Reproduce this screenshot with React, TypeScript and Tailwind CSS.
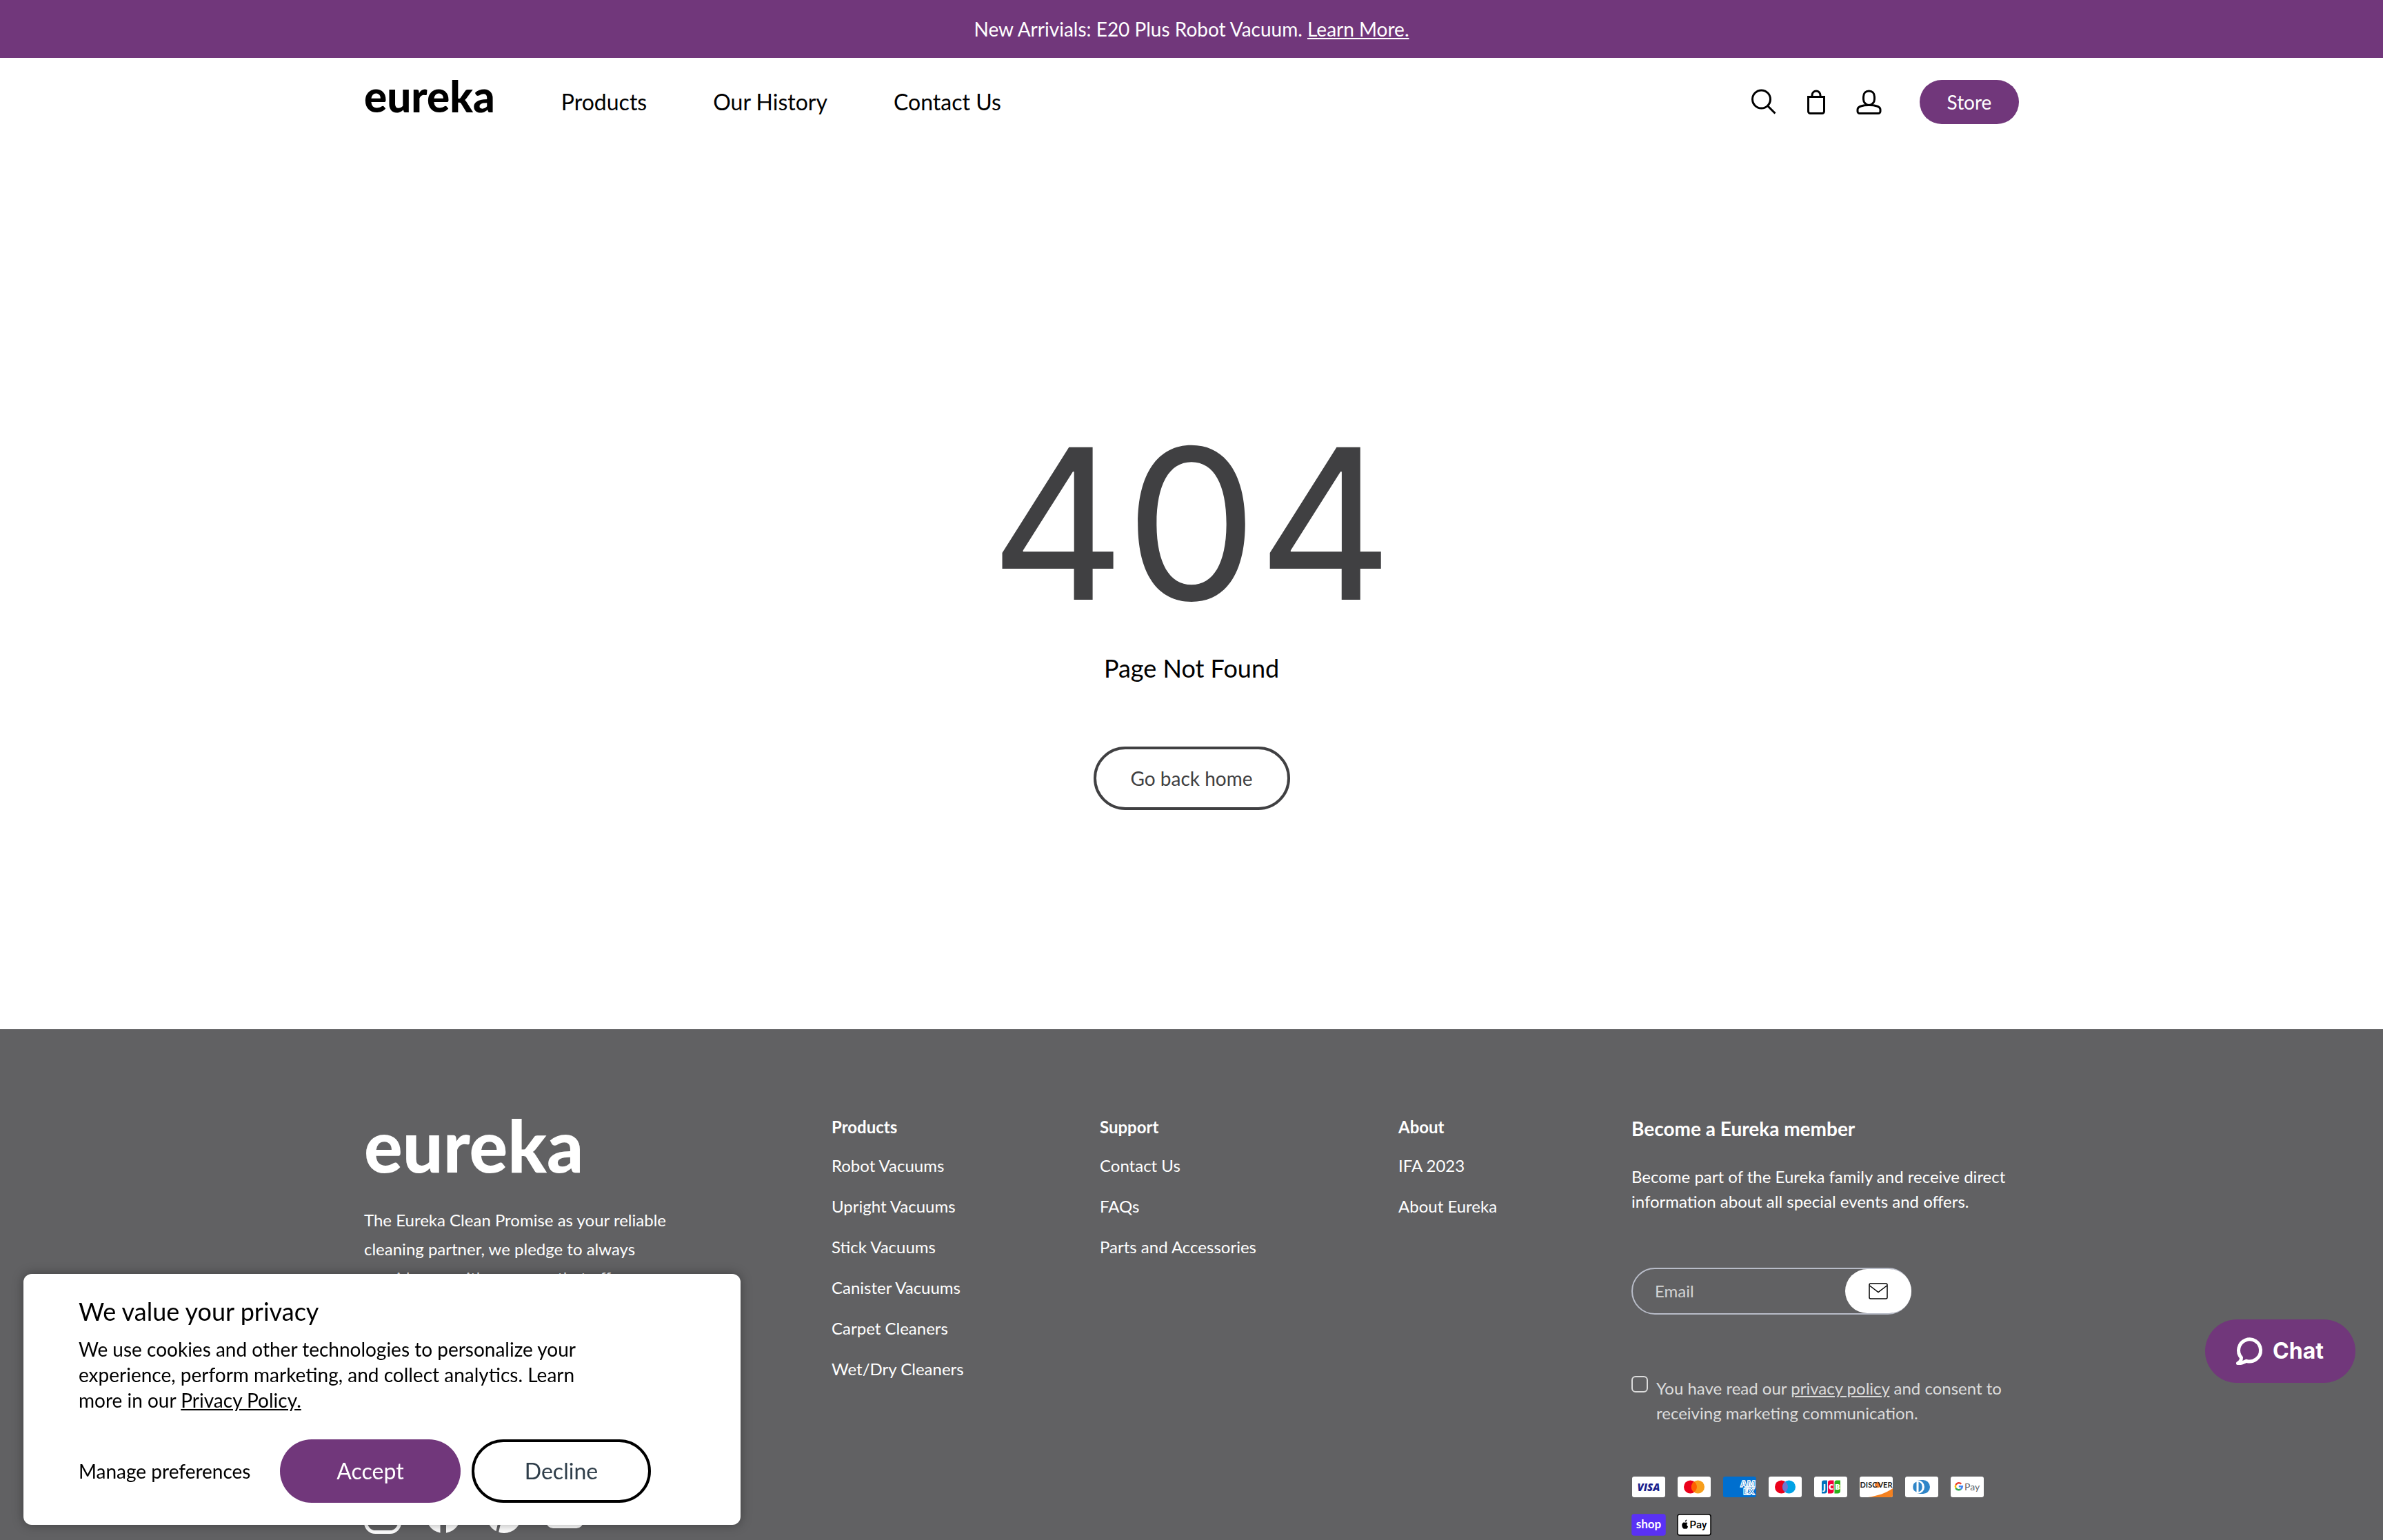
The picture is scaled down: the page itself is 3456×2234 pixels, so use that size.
import type { ReactNode } from "react";

const navLinks = ["Products", "Our History", "Contact Us"];

const footerColumns = [
  {
    title: "Products",
    links: [
      "Robot Vacuums",
      "Upright Vacuums",
      "Stick Vacuums",
      "Canister Vacuums",
      "Carpet Cleaners",
      "Wet/Dry Cleaners",
    ],
  },
  { title: "Support", links: ["Contact Us", "FAQs", "Parts and Accessories"] },
  { title: "About", links: ["IFA 2023", "About Eureka"] },
];

function Header() {
  return (
    <header className="mx-auto flex h-32 w-full max-w-[2400px] items-start justify-between pt-8">
      <div className="flex items-start gap-24">
        <a href="#" className="text-[62px] font-black leading-[46px]">
          eureka
        </a>
        <nav className="flex gap-24 text-[32px] leading-[64px]">
          {navLinks.map((link) => (
            <a key={link} href="#">
              {link}
            </a>
          ))}
        </nav>
      </div>

      <div className="flex h-16 items-center">
        <button aria-label="Search" className="mr-9">
          <svg className="size-10" viewBox="0 0 40 40" fill="none" stroke="#000" strokeWidth="3">
            <circle cx="15.500" cy="16" r="13" />
            <path d="M24.500 25.500 35.500 36.500" />
          </svg>
        </button>
        <button aria-label="Cart" className="mr-9">
          <svg className="size-10" viewBox="0 0 40 40" fill="none" stroke="#000" strokeWidth="3">
            <path d="M7.500 12.500h23v21a3 3 0 0 1-3 3h-17a3 3 0 0 1-3-3z" />
            <path d="M13 12.500V10a6 6 0 0 1 12 0v2.500" />
          </svg>
        </button>
        <button aria-label="Account" className="mr-[53px]">
          <svg className="size-10" viewBox="0 0 40 40" fill="none" stroke="#000" strokeWidth="3">
            <path d="M19.500 4c5 0 8 3.500 8 8.500v3.500c0 5-4 8.500-8 8.500s-8-3.500-8-8.500v-3.500c0-5 3-8.500 8-8.500z" />
            <path d="M19.500 24.500c9 0 16.500 2 16.500 6.500v2.500a3 3 0 0 1-3 3H6a3 3 0 0 1-3-3V31c0-4.500 7.500-6.500 16.500-6.500z" />
          </svg>
        </button>
        <a href="#" className="flex h-16 w-36 items-center justify-center rounded-full bg-[#71377b] text-[28px] text-white">
          Store
        </a>
      </div>
    </header>
  );
}

function Card({ label, bg = "#fff", border, children }: { label: string; bg?: string; border?: string; children: ReactNode }) {
  return (
    <li>
      <svg role="img" aria-label={label} className="h-8 w-[50px]" viewBox="0 0 50 32">
        <rect x="1" y="1" width="48" height="30" rx="3" fill={bg} stroke={border ?? "none"} strokeWidth="1.500" />
        {children}
      </svg>
    </li>
  );
}

function PaymentCards() {
  return (
    <ul className="mt-[73px] flex flex-wrap gap-x-4 gap-y-[23px] font-['Open_Sans']">
      <Card label="Visa">
        <text x="25" y="21.500" fontSize="15" fontWeight="800" fontStyle="italic" textAnchor="middle" fill="#1a1f8c">
          VISA
        </text>
      </Card>
      <Card label="Mastercard">
        <circle cx="19.500" cy="16" r="9.500" fill="#eb001b" />
        <circle cx="30.500" cy="16" r="9.500" fill="#f79e1b" />
        <path d="M25 8.300a9.500 9.500 0 0 1 0 15.400 9.500 9.500 0 0 1 0-15.400z" fill="#ff5f00" />
      </Card>
      <Card label="American Express" bg="#006fcf">
        <g fill="none" stroke="#fff" strokeWidth="1.300" fontWeight="800" fontSize="13">
          <text x="26" y="15.500">AM</text>
          <text x="30" y="26.500">EX</text>
        </g>
      </Card>
      <Card label="Maestro">
        <circle cx="19.500" cy="16" r="9.500" fill="#eb001b" />
        <circle cx="30.500" cy="16" r="9.500" fill="#00a2e5" />
        <path d="M25 8.300a9.500 9.500 0 0 1 0 15.400 9.500 9.500 0 0 1 0-15.400z" fill="#7375cf" />
      </Card>
      <Card label="JCB">
        <path d="M15 6.500h5v15a4 4 0 0 1-4 4h-4v-16a3 3 0 0 1 3-3z" fill="#0072bc" />
        <path d="M24 6.500h5.500v15a4 4 0 0 1-4 4H21v-16a3 3 0 0 1 3-3z" fill="#f4003c" />
        <path d="M33.500 6.500H39v15a4 4 0 0 1-4 4h-4.500v-16a3 3 0 0 1 3-3z" fill="#2bb31a" />
        <g fill="#fff" fontSize="11" fontWeight="800" textAnchor="middle">
          <text x="16" y="20">J</text>
          <text x="25.500" y="20">C</text>
          <text x="35" y="20">B</text>
        </g>
      </Card>
      <Card label="Discover">
        <path d="M13 31c14-2 26-6 36-13v10a3 3 0 0 1-3 3z" fill="#f48120" />
        <circle cx="27" cy="13" r="4.200" fill="#f08030" />
        <g fill="#222" fontSize="11" fontWeight="700" fontFamily="Lato">
          <text x="1.500" y="17">DISC</text>
          <text x="48.500" y="17" textAnchor="end">VER</text>
        </g>
      </Card>
      <Card label="Diners Club">
        <path d="M18 6h9a10 10 0 0 1 0 20h-9z" fill="#3086c8" />
        <circle cx="19" cy="16" r="10" fill="#fff" />
        <path d="M17.500 8.500v15a8 8 0 0 1 0-15zM20.500 8.500a8 8 0 0 1 0 15z" fill="#3086c8" />
      </Card>
      <Card label="Google Pay">
        <g fill="none" strokeWidth="2.600">
          <path d="M16.300 11.500a5 5 0 0 0-7.800 1.500" stroke="#ea4335" />
          <path d="M8.500 13a5 5 0 0 0 0 5" stroke="#fbbc04" />
          <path d="M8.500 18a5 5 0 0 0 7.200 1.200" stroke="#34a853" />
          <path d="M12.800 15.300h5a5 5 0 0 1-2.100 3.900" stroke="#4285f4" />
        </g>
        <text x="21" y="21" fontSize="14" fontFamily="Lato" fill="#5f6368">
          Pay
        </text>
      </Card>
      <Card label="Shop Pay" bg="#5a31f4" border="#5a31f4">
        <text x="25" y="21" fontSize="17" fontWeight="700" fontFamily="Lato" textAnchor="middle" fill="#fff">
          shop
        </text>
      </Card>
      <Card label="Apple Pay" border="#000">
        <path
          d="M15.500 13.300c-1.300-1-2.400-.8-3.600-.3-1-.4-2-.6-3 0-2.600 1.600-1.700 6.300.4 8.300.9.900 1.600.4 2.600.1 1.100.4 1.800.7 2.700-.2.700-.7 1.200-1.500 1.500-2.600-1.900-.9-2.300-3.900-.6-5.300zM11.800 11.600c-.1-1.600 1-2.900 2.400-3.100.2 1.700-1 3-2.400 3.100z"
          fill="#000"
        />
        <text x="18.500" y="21" fontSize="15" fontWeight="500" fontFamily="Roboto" fill="#000">
          Pay
        </text>
      </Card>
    </ul>
  );
}

function SocialLinks() {
  return (
    <div className="mt-auto flex gap-[34px] pb-[3px]">
      <a href="#" aria-label="Instagram">
        <svg className="size-[54px]" viewBox="0 0 54 54" fill="none" stroke="#fff" strokeWidth="5">
          <rect x="2.500" y="2.500" width="49" height="49" rx="14" />
          <circle cx="27" cy="27" r="11" />
        </svg>
      </a>
      <a href="#" aria-label="Facebook">
        <svg className="size-[54px]" viewBox="0 0 54 54">
          <circle cx="27" cy="28" r="25" fill="#fff" />
          <path d="M22.500 54V34H17v-7h5.500v-5c0-6 3.500-9 9-9h4v7h-3c-2 0-2.500 1-2.500 3v4h5.500l-1 7H31v20z" fill="#616163" />
        </svg>
      </a>
      <a href="#" aria-label="Pinterest">
        <svg className="size-[54px]" viewBox="0 0 54 54">
          <circle cx="27" cy="28" r="25" fill="#fff" />
          <path d="M17 54c0-4 3-14 5-22 3 4 12 3 14-4 3-9-3-14-9-14-8 0-12 8-8 14" fill="none" stroke="#616163" strokeWidth="4" />
        </svg>
      </a>
      <a href="#" aria-label="YouTube">
        <svg className="size-[54px]" viewBox="0 0 54 54">
          <rect x="0" y="8" width="54" height="38" rx="10" fill="#fff" />
          <path d="M22 19v16l14-8z" fill="#616163" />
        </svg>
      </a>
    </div>
  );
}

function Footer() {
  return (
    <footer className="flex-1 bg-[#616163] pt-[124px] text-[24px] leading-9 text-white">
      <div className="mx-auto grid max-w-[2400px] grid-cols-[678fr_389fr_433fr_338fr_562fr]">
        <div className="flex flex-col">
          <a href="#" className="text-[104px] font-black leading-[88px]">
            eureka
          </a>
          <p className="mt-11 max-w-[460px] leading-[42px]">
            The Eureka Clean Promise as your reliable cleaning partner, we pledge to always provide you with vacuums that offer
          </p>
          <SocialLinks />
        </div>

        {footerColumns.map((column) => (
          <div key={column.title}>
            <h2 className="font-bold">{column.title}</h2>
            <ul className="mt-5 flex flex-col gap-[23px]">
              {column.links.map((link) => (
                <li key={link}>
                  <a href="#">{link}</a>
                </li>
              ))}
            </ul>
          </div>
        ))}

        <div>
          <h2 className="text-[28px] font-bold leading-10">Become a Eureka member</h2>
          <p className="mt-8">Become part of the Eureka family and receive direct information about all special events and offers.</p>
          <form className="mt-[78px]">
            <div className="flex h-[68px] w-[406px] rounded-full border-2 border-[#b8bcc8]">
              <input
                type="email"
                aria-label="Email"
                placeholder="Email"
                className="min-w-0 flex-1 bg-transparent pl-8 outline-none placeholder:text-[#d4d4d4]"
              />
              <button type="button" aria-label="Subscribe" className="-mr-0.5 flex w-24 items-center justify-center rounded-full bg-white">
                <svg className="h-6 w-7" viewBox="0 0 28 24" fill="none" stroke="#000" strokeWidth="1.500">
                  <rect x="1" y="1" width="26" height="22" rx="2" />
                  <path d="m1.500 4 12.500 9.500L26.500 4" />
                </svg>
              </button>
            </div>
            <div className="mt-[89px] flex items-start gap-3 text-[#dcdcdc]">
              <input
                id="consent"
                type="checkbox"
                className="size-6 shrink-0 appearance-none rounded-md border-2 border-[#dcdcdc]"
              />
              <label htmlFor="consent">
                You have read our{" "}
                <a href="#" className="underline">
                  privacy policy
                </a>{" "}
                and consent to receiving marketing communication.
              </label>
            </div>
          </form>
          <PaymentCards />
        </div>
      </div>
    </footer>
  );
}

function CookieBanner() {
  return (
    <section
      aria-label="Cookie consent"
      className="fixed bottom-[22px] left-[34px] w-[1040px] rounded-xl bg-white px-20 py-8 text-[28px] shadow-[0_0_16px_rgba(0,0,0,0.35)]"
    >
      <h2 className="text-[36px] leading-[44px]">We value your privacy</h2>
      <p className="mt-[15px] max-w-[760px] leading-[37px]">
        We use cookies and other technologies to personalize your experience, perform marketing, and collect analytics. Learn more in
        our{" "}
        <a href="#" className="underline">
          Privacy Policy.
        </a>
      </p>
      <div className="mt-[38px] flex items-center">
        <button className="w-[292px] text-left">Manage preferences</button>
        <button className="h-[92px] w-[262px] rounded-full bg-[#71377b] text-[32px] text-white">Accept</button>
        <button className="ml-4 h-[92px] w-[260px] rounded-full border-4 border-black text-[32px] text-[#2f3e4a]">Decline</button>
      </div>
    </section>
  );
}

function ChatButton() {
  return (
    <button className="fixed bottom-[228px] right-10 flex h-[92px] w-[218px] items-center justify-center gap-3 rounded-full bg-[#71377b] pr-1 font-['Inter'] text-[32px] font-bold text-white">
      <svg className="size-11" viewBox="0 0 44 44" fill="none" stroke="#fff" strokeWidth="5" strokeLinecap="round" strokeLinejoin="round">
        <path d="M10.500 31.500A16 16 0 1 1 18 36.300C13 39 9 40 5.500 39.500c3-1.500 5-4.500 5-8z" />
      </svg>
      Chat
    </button>
  );
}

export default function App() {
  return (
    <div className="flex min-h-screen flex-col bg-white font-['Lato',sans-serif] text-black">
      <p className="bg-[#71377b] py-[22px] text-center text-[28px] leading-10 text-white">
        New Arrivials: E20 Plus Robot Vacuum.{" "}
        <a href="#" className="underline">
          Learn More.
        </a>
      </p>
      <Header />
      <main className="flex flex-col items-center pt-[395px] pb-[318px]">
        <h1 className="font-['Inter'] text-[304px] leading-none text-[#404042]">404</h1>
        <p className="mt-9 text-[36px] leading-[44px]">Page Not Found</p>
        <a
          href="#"
          className="mt-[92px] flex h-[92px] w-[285px] items-center justify-center rounded-full border-4 border-[#404042] text-[28px] text-[#404042]"
        >
          Go back home
        </a>
      </main>
      <Footer />
      <CookieBanner />
      <ChatButton />
    </div>
  );
}
